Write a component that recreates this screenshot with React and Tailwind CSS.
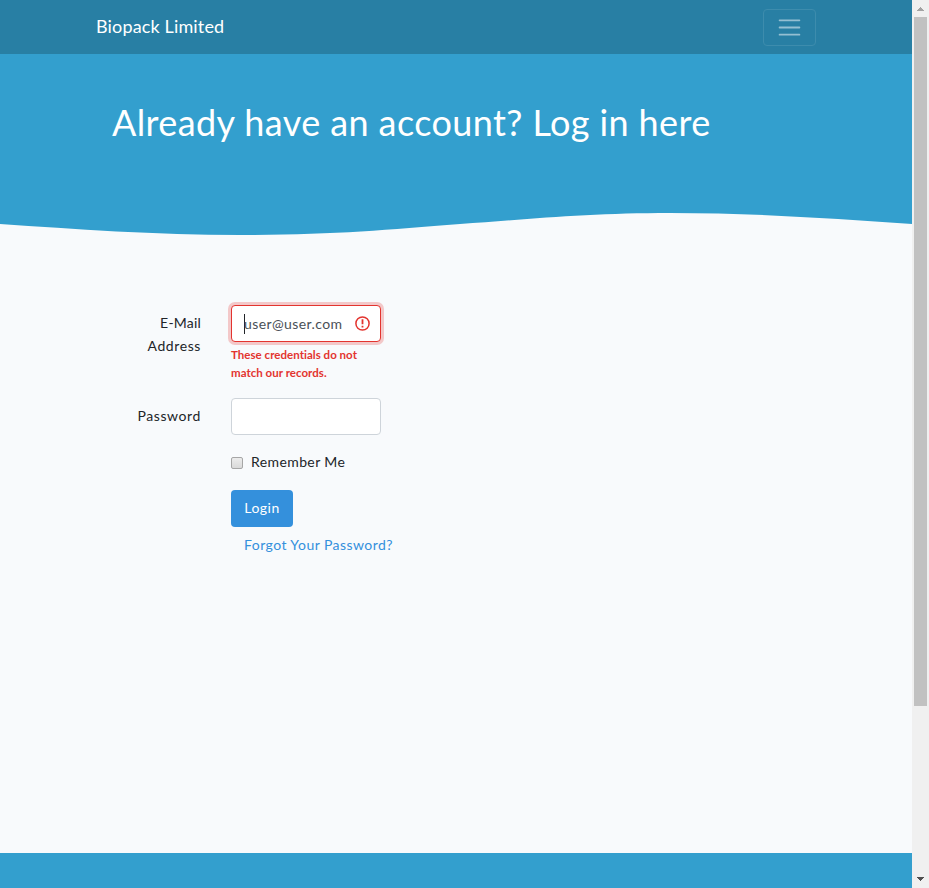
function Scrollbar() {
  return (
    <div className="flex h-full w-[17px] shrink-0 flex-col items-center bg-[#f0f0f0]">
      <svg className="h-[17px] w-[17px] shrink-0" viewBox="0 0 17 17" shapeRendering="crispEdges">
        <path d="M8 7h1v1h1v1h1v1h1v1H5v-1h1V9h1V8h1z" fill="#a3a3a3" />
      </svg>
      <div className="mr-px h-[689px] w-[13px] bg-[#c1c1c1]" />
      <svg className="mt-auto h-[17px] w-[17px] shrink-0" viewBox="0 0 17 17" shapeRendering="crispEdges">
        <path d="M5 6h7v1h-1v1h-1v1H9v1H8V9H7V8H6V7H5z" fill="#505050" />
      </svg>
    </div>
  );
}

export default function App() {
  return (
    <div className="flex h-[888px] w-[929px] overflow-hidden bg-[#f8fafc] font-[Lato,sans-serif] text-[14px] leading-[23px] text-[#212529]">
      <div className="flex h-full w-[912px] flex-col">
        <nav className="flex h-[54px] shrink-0 items-center justify-between bg-[#287fa4] px-24 text-white">
          <span className="pb-[2px] text-[18px] leading-[29px] tracking-[0.15px]">Biopack Limited</span>
          <button aria-label="Toggle navigation" className="mt-px flex h-[37px] w-[53px] items-center justify-center rounded-[4px] border border-[#3d8cad]">
            <svg width="27" height="27" viewBox="0 0 30 30">
              <path d="M4 7h22M4 15h22M4 23h22" stroke="rgba(255,255,255,0.5)" strokeLinecap="round" strokeMiterlimit="10" strokeWidth="2" />
            </svg>
          </button>
        </nav>
        <header className="h-[158px] shrink-0 bg-[#339fce] px-28 pt-[47px]">
          <h1 className="whitespace-nowrap text-[36px] leading-[43px] tracking-[0.4px] text-white">Already have an account? Log in here</h1>
        </header>
        <svg className="h-[24px] w-full shrink-0" viewBox="0 0 912 24">
          <path d="M0 0H912V12C835 7 760 1 670 1C590 1 530 7 460 12C385 18 330 23 240 23C155 23 75 17 0 12Z" fill="#339fce" />
        </svg>
        <main className="flex-1 pl-[111px] pt-[69px]">
          <div className="flex">
            <label htmlFor="email" className="mr-[30px] w-[90px] pt-[6px] text-right"><span className="tracking-[0.2px]">E-Mail</span><br /><span className="tracking-[0.6px]">Address</span></label>
            <div className="w-[150px]">
              <div className="flex h-[37px] items-center justify-between rounded-[4px] border border-[#e3342f] bg-white pl-[12px] pr-[10px] text-[#495057] shadow-[0_0_0_3px_rgba(227,52,47,0.25)]">
                <div id="email" className="flex items-center">
                  <span className="-mr-px h-5 w-px bg-[#212529]" />
                  <span className="tracking-[0.4px]">user@user.com</span>
                </div>
                <svg width="15" height="15" viewBox="0 0 15 15" fill="none" stroke="#e3342f">
                  <circle cx="7.5" cy="7.5" r="6.6" strokeWidth="1.5" />
                  <path d="M7.5 3.3v5M7.5 9.8v1.8" strokeWidth="1.8" />
                </svg>
              </div>
              <p className="mt-1 whitespace-nowrap text-[11.5px] font-bold leading-[18px] tracking-[0.03px] text-[#e3342f]">These credentials do not<br />match our records.</p>
            </div>
          </div>
          <div className="mt-[16px] flex">
            <label htmlFor="password" className="mr-[30px] w-[90px] pt-[6px] text-right tracking-[0.6px]">Password</label>
            <input id="password" type="password" className="h-[37px] w-[150px] rounded-[4px] border border-[#ced4da] bg-white px-3" />
          </div>
          <label className="ml-[120px] mt-4 flex h-[23px] items-center">
            <input type="checkbox" className="mr-[8px] h-[12px] w-[12px] appearance-none rounded-[2px] border border-[#a6a6a6] bg-linear-to-b from-[#ececec] to-[#d9d9d9]" />
            <span className="pb-[2px] tracking-[0.4px]">Remember Me</span>
          </label>
          <div className="ml-[120px] mt-4 flex flex-col items-start">
            <button className="h-[37px] w-[62px] rounded-[4px] bg-[#3490dc] pb-[2px] tracking-[0.5px] text-white">Login</button>
            <a className="ml-[13px] mt-[6px] whitespace-nowrap tracking-[0.45px] text-[#3490dc]">Forgot Your Password?</a>
          </div>
        </main>
        <footer className="h-[35px] shrink-0 bg-[#339fce]" />
      </div>
      <Scrollbar />
    </div>
  );
}
